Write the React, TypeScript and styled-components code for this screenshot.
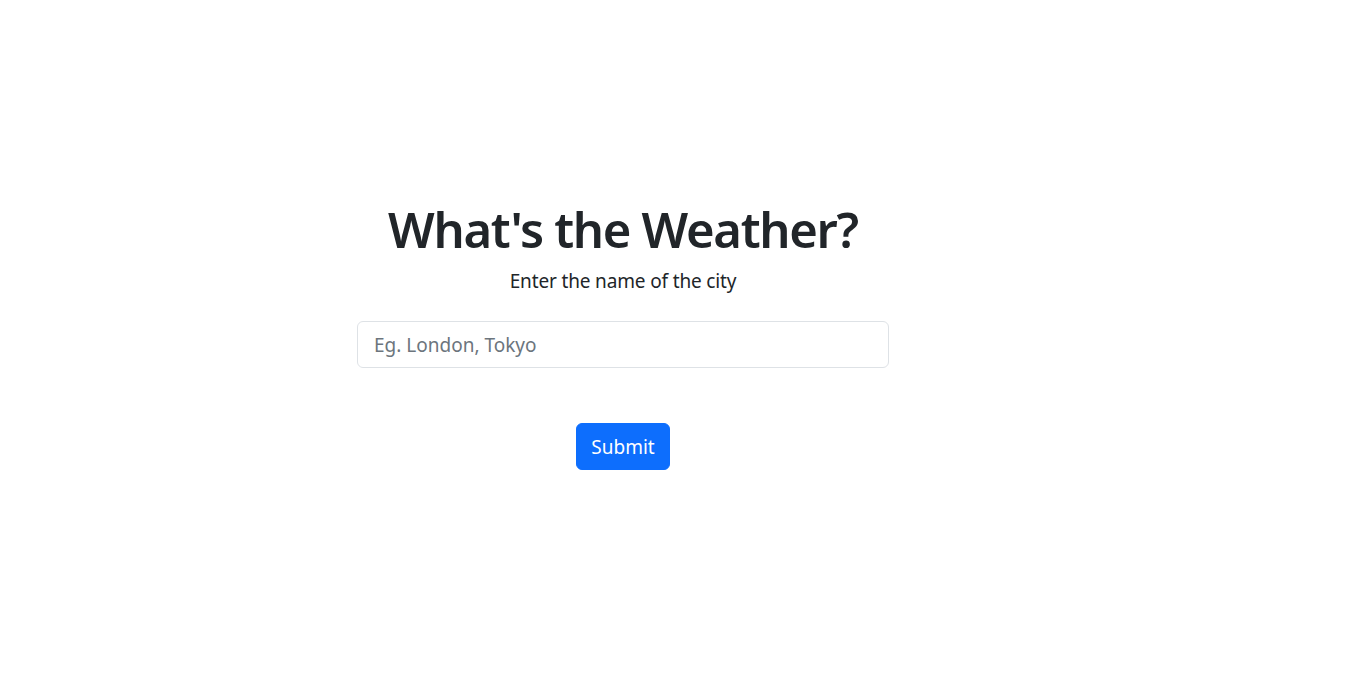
import styled, { createGlobalStyle } from "styled-components"

const GlobalStyle = createGlobalStyle`
  * { box-sizing: border-box; }
  body {
    margin: 0;
    background: #fff;
    color: #212529;
    font-family: "Noto Sans", "Open Sans", sans-serif;
  }
`

const Page = styled.main`
  min-height: 100vh;
  padding-top: 199px;
`

const Container = styled.div`
  width: 532px;
  margin-left: 357px;
  display: flex;
  flex-direction: column;
  align-items: center;
`

const Title = styled.h1`
  margin: 0;
  font-size: 49px;
  font-weight: 600;
  line-height: 60px;
  letter-spacing: -1.3px;
  color: #212529;
`

const Subtitle = styled.p`
  margin: 8px 0 26px;
  font-size: 19px;
  line-height: 28px;
  letter-spacing: -0.15px;
`

const Input = styled.input`
  width: 100%;
  height: 47px;
  padding: 8px 16px;
  font-family: inherit;
  font-size: 19px;
  color: #212529;
  border: 1px solid #dee2e6;
  border-radius: 6px;
  outline: none;

  &::placeholder {
    color: #6c757d;
  }
`

const Button = styled.button`
  margin-top: 55px;
  height: 47px;
  padding: 0 14px;
  font-family: inherit;
  font-size: 19px;
  color: #fff;
  background: #0d6efd;
  border: 1px solid #0d6efd;
  border-radius: 6px;
  cursor: pointer;
`

export default function App() {
  return (
    <Page>
      <GlobalStyle />
      <Container>
        <Title>What's the Weather?</Title>
        <Subtitle>Enter the name of the city</Subtitle>
        <Input type="text" placeholder="Eg. London, Tokyo" />
        <Button type="submit">Submit</Button>
      </Container>
    </Page>
  )
}
